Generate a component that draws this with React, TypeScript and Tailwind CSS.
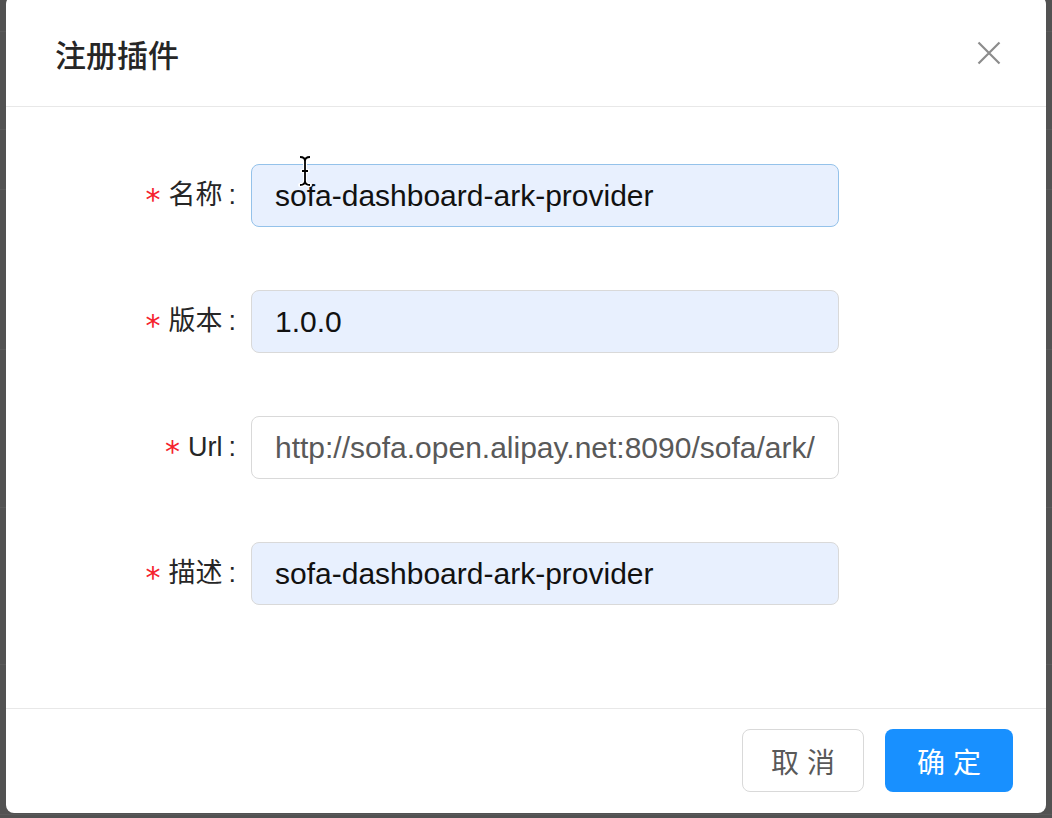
import React from "react";

const rows: { label: string; value: string; filled: boolean; focus?: boolean; muted?: boolean }[] = [
  { label: "名称", value: "sofa-dashboard-ark-provider", filled: true, focus: true },
  { label: "版本", value: "1.0.0", filled: true },
  { label: "Url", value: "http://sofa.open.alipay.net:8090/sofa/ark/sofa-dashboard-ark-provider.jar", filled: false, muted: true },
  { label: "描述", value: "sofa-dashboard-ark-provider", filled: true },
];

function FormRow({ r }: { r: (typeof rows)[number] }) {
  return (
    <div className="flex items-center h-[63px]">
      <div className="w-[230px] flex items-center justify-end text-[27px] text-[#262626] leading-none">
        <span className="text-[#f5222d] text-[30px] mr-[8px] mt-[8px] font-['DejaVu_Sans',sans-serif]">*</span>
        <span>{r.label}</span>
        <span className="ml-[6px]">:</span>
      </div>
      <input
        readOnly
        value={r.value}
        className={
          "ml-[15px] w-[588px] h-[63px] rounded-[8px] border px-[23px] text-[30px] outline-none font-['Liberation_Sans','Noto_Sans_CJK_SC',sans-serif] " +
          (r.filled ? "bg-[#e8f0fe] text-[#111] " : "bg-white text-[#595959] ") +
          (r.focus ? "border-[#94c2ea]" : "border-[#d9d9d9]")
        }
      />
    </div>
  );
}

export default function App() {
  const bgRows = [32, 98, 60, 160, 158, 157, 150];
  return (
    <div className="relative w-[1052px] h-[818px] overflow-hidden bg-[#525252] font-['Liberation_Sans','Noto_Sans_CJK_SC',sans-serif]">
      {/* background page behind the mask */}
      <div className="flex flex-col">
        {bgRows.map((h, i) => (
          <div key={i} style={{ height: h }} className="border-b border-[#5a5a5a]" />
        ))}
      </div>

      {/* modal */}
      <div className="absolute left-[6px] top-[-4px] w-[1040px] h-[817px] bg-white rounded-[8px] flex flex-col">
        <div className="h-[111px] border-b border-[#e8e8e8] flex items-center justify-between pl-[49px] pr-[45px] pt-[4px]">
          <div className="text-[31px] font-medium text-[#262626] font-['Noto_Sans_CJK_SC',sans-serif] leading-none">注册插件</div>
          <svg width="24" height="24" viewBox="0 0 24 24">
            <path d="M1.5 1.5 L22.5 22.5 M22.5 1.5 L1.5 22.5" stroke="#8c8c8c" strokeWidth="2.2" strokeLinecap="butt" fill="none" />
          </svg>
        </div>

        <div className="pt-[57px] pb-[103px] flex flex-col gap-[63px]">
          {rows.map((r) => (
            <FormRow key={r.label} r={r} />
          ))}
        </div>

        <div className="border-t border-[#e8e8e8] flex justify-end items-center gap-[21px] pt-[20px] pb-[20px] pr-[33px]">
          <button className="w-[122px] h-[63px] rounded-[8px] border border-[#d9d9d9] bg-white text-[28px] text-[#595959] font-['Noto_Sans_CJK_SC',sans-serif] tracking-[8px] pl-[8px]">
            取消
          </button>
          <button className="w-[128px] h-[63px] rounded-[8px] bg-[#1890ff] text-[28px] text-white font-['Noto_Sans_CJK_SC',sans-serif] tracking-[8px] pl-[8px]">
            确定
          </button>
        </div>
      </div>

      {/* mouse I-beam cursor */}
      <svg className="absolute left-[297px] top-[155px]" width="16" height="32" viewBox="0 0 16 32">
        <path d="M3 2 Q8 2 8 6 L8 26 Q8 30 3 30 M13 2 Q8 2 8 6 M8 26 Q8 30 13 30 M5 16 L11 16" stroke="#fff" strokeWidth="4" fill="none" strokeLinecap="round" />
        <path d="M3 2 Q8 2 8 6 L8 26 Q8 30 3 30 M13 2 Q8 2 8 6 M8 26 Q8 30 13 30 M5 16 L11 16" stroke="#000" strokeWidth="1.8" fill="none" />
      </svg>
    </div>
  );
}
